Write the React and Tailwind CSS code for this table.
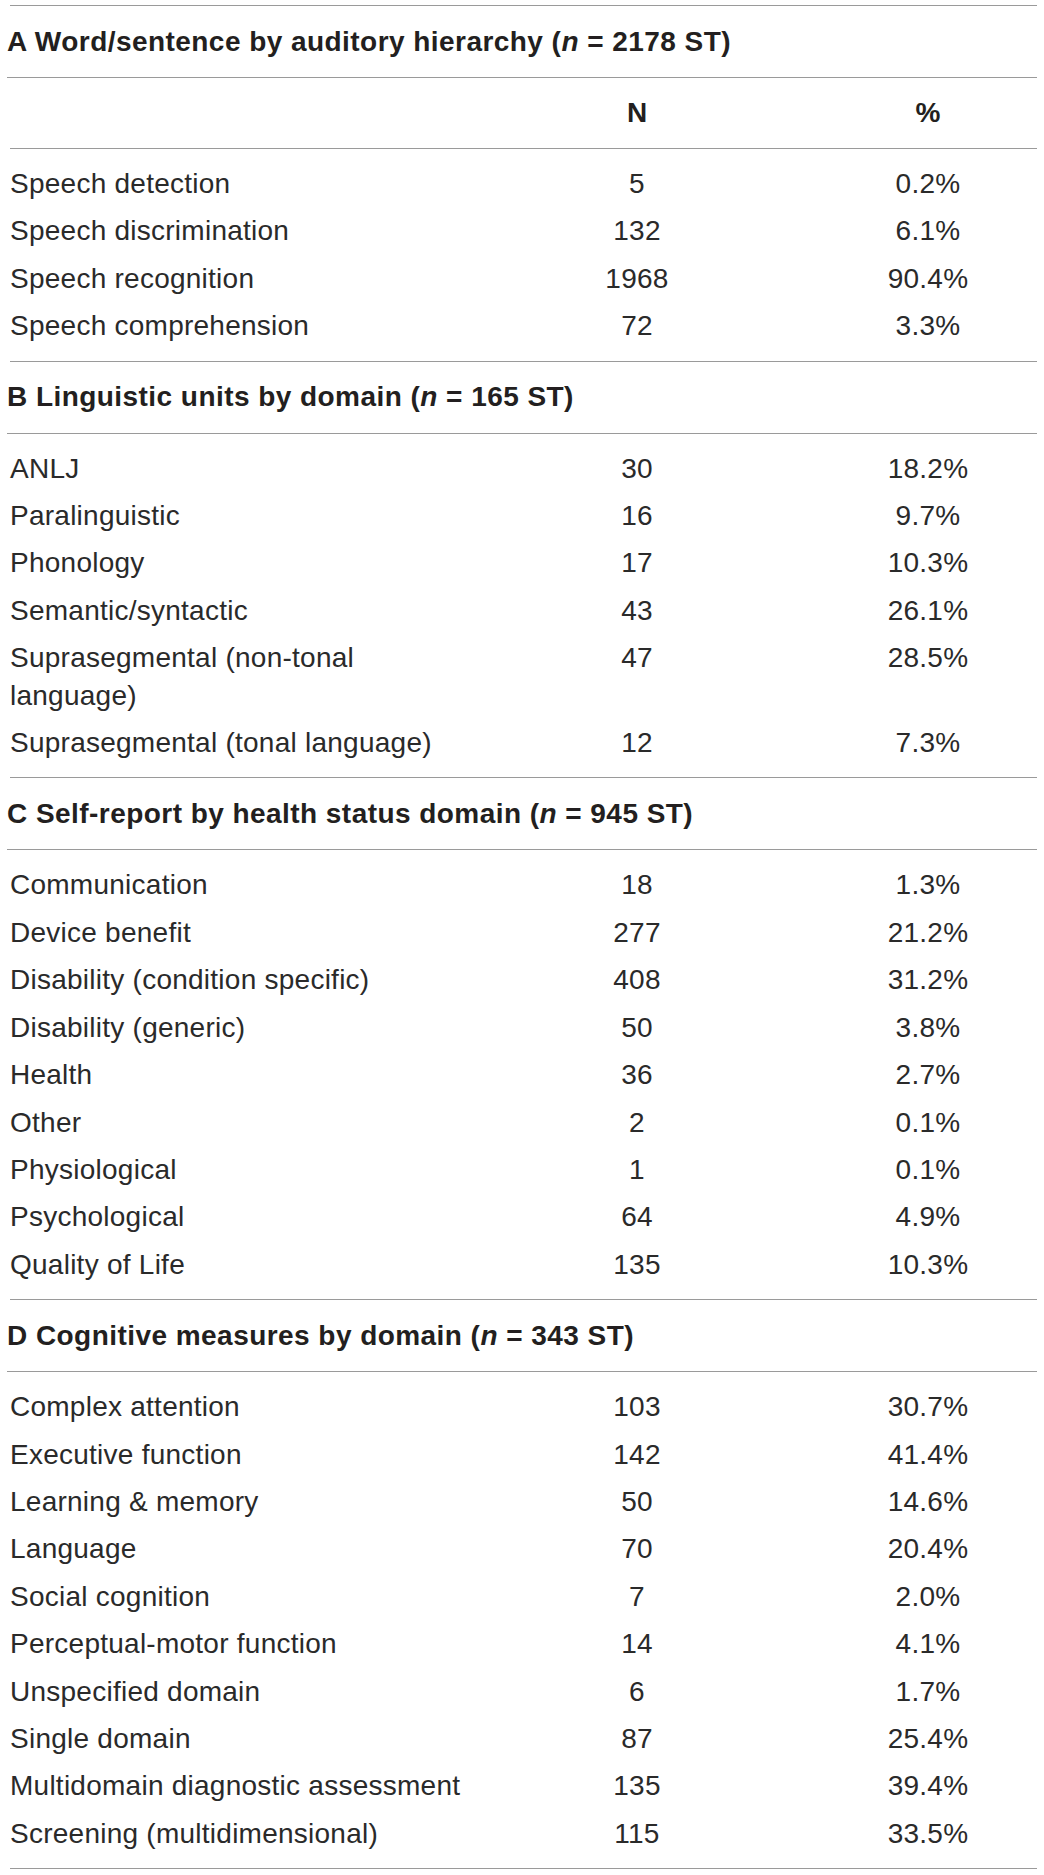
const sections = [
  {
    label: 'A Word/sentence by auditory hierarchy',
    n: '2178',
    showColumns: true,
    rows: [
      ['Speech detection', '5', '0.2%'],
      ['Speech discrimination', '132', '6.1%'],
      ['Speech recognition', '1968', '90.4%'],
      ['Speech comprehension', '72', '3.3%'],
    ],
  },
  {
    label: 'B Linguistic units by domain',
    n: '165',
    rows: [
      ['ANLJ', '30', '18.2%'],
      ['Paralinguistic', '16', '9.7%'],
      ['Phonology', '17', '10.3%'],
      ['Semantic/syntactic', '43', '26.1%'],
      [['Suprasegmental (non-tonal', 'language)'], '47', '28.5%'],
      ['Suprasegmental (tonal language)', '12', '7.3%'],
    ],
  },
  {
    label: 'C Self-report by health status domain',
    n: '945',
    rows: [
      ['Communication', '18', '1.3%'],
      ['Device benefit', '277', '21.2%'],
      ['Disability (condition specific)', '408', '31.2%'],
      ['Disability (generic)', '50', '3.8%'],
      ['Health', '36', '2.7%'],
      ['Other', '2', '0.1%'],
      ['Physiological', '1', '0.1%'],
      ['Psychological', '64', '4.9%'],
      ['Quality of Life', '135', '10.3%'],
    ],
  },
  {
    label: 'D Cognitive measures by domain',
    n: '343',
    rows: [
      ['Complex attention', '103', '30.7%'],
      ['Executive function', '142', '41.4%'],
      ['Learning & memory', '50', '14.6%'],
      ['Language', '70', '20.4%'],
      ['Social cognition', '7', '2.0%'],
      ['Perceptual-motor function', '14', '4.1%'],
      ['Unspecified domain', '6', '1.7%'],
      ['Single domain', '87', '25.4%'],
      ['Multidomain diagnostic assessment', '135', '39.4%'],
      ['Screening (multidimensional)', '115', '33.5%'],
    ],
  },
];

const grid = 'grid grid-cols-[445px_364px_218px]';

function SectionHeader({ label, n }) {
  return (
    <div className="h-[72px] flex items-center border-b border-[#9a9a9a] -ml-[3px] font-bold tracking-[0.45px] text-[#231f20]">
      {label} (<i>n</i>&nbsp;= {n} ST)
    </div>
  );
}

function Row({ row }) {
  const [name, count, pct] = row;
  return (
    <div className={`${grid} py-[5px] leading-[37.4px] tracking-[0.25px]`}>
      <div className="whitespace-nowrap">
        {Array.isArray(name)
          ? name.map((part, i) => <div key={i}>{part}</div>)
          : name}
      </div>
      <div className="text-center">{count}</div>
      <div className="text-center">{pct}</div>
    </div>
  );
}

export default function App() {
  return (
    <div className="bg-white min-h-screen pt-[5px]">
      <div
        className="ml-[10px] w-[1027px] border-t border-[#9a9a9a] text-[28px] text-[#2a2a2a]"
        style={{ fontFamily: '"Liberation Sans", Arial, sans-serif' }}
      >
        {sections.map((s) => (
          <div key={s.label}>
            <SectionHeader label={s.label} n={s.n} />
            {s.showColumns && (
              <div className={`${grid} h-[71px] items-center border-b border-[#9a9a9a] font-bold text-[#231f20]`}>
                <div />
                <div className="text-center">N</div>
                <div className="text-center">%</div>
              </div>
            )}
            <div className="py-[11px] border-b border-[#9a9a9a]">
              {s.rows.map((r, i) => (
                <Row key={i} row={r} />
              ))}
            </div>
          </div>
        ))}
      </div>
    </div>
  );
}
